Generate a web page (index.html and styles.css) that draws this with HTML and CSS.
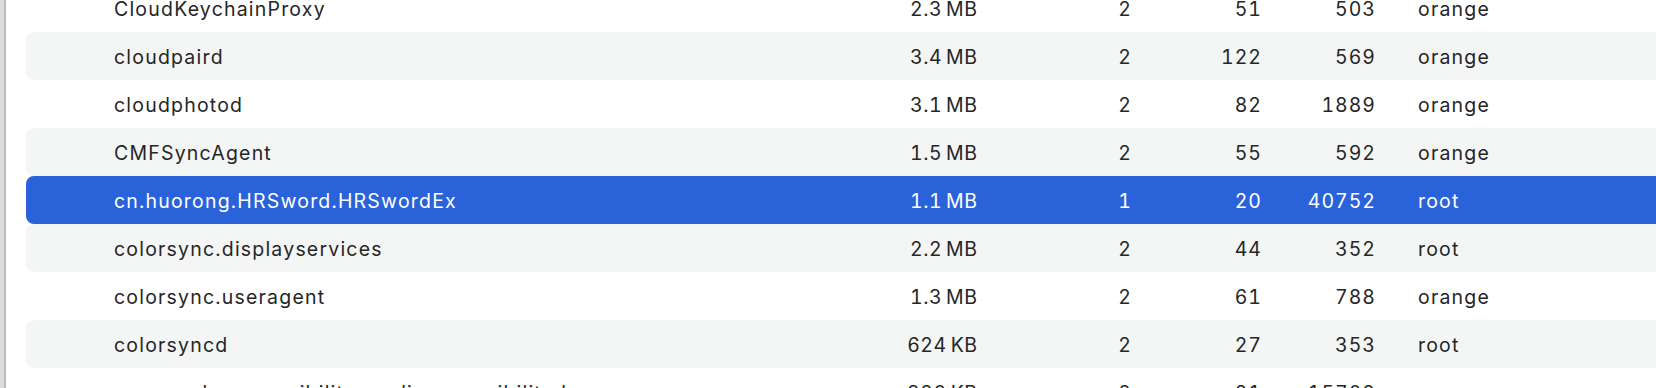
FILE: index.html
```html
<!DOCTYPE html>
<html>
<head>
<meta charset="utf-8">
<link rel="stylesheet" href="styles.css">
</head>
<body>
<div class="window">
  <div class="edge"></div>
  <div class="list">
    <div class="row"><div class="name">CloudKeychainProxy</div><div class="num size">2.3&thinsp;MB</div><div class="num thr">2</div><div class="num ports">51</div><div class="num pid">503</div><div class="user">orange</div></div>
    <div class="row alt"><div class="name">cloudpaird</div><div class="num size">3.4&thinsp;MB</div><div class="num thr">2</div><div class="num ports">122</div><div class="num pid">569</div><div class="user">orange</div></div>
    <div class="row"><div class="name">cloudphotod</div><div class="num size">3.1&thinsp;MB</div><div class="num thr">2</div><div class="num ports">82</div><div class="num pid">1889</div><div class="user">orange</div></div>
    <div class="row alt"><div class="name">CMFSyncAgent</div><div class="num size">1.5&thinsp;MB</div><div class="num thr">2</div><div class="num ports">55</div><div class="num pid">592</div><div class="user">orange</div></div>
    <div class="row selected"><div class="name">cn.huorong.HRSword.HRSwordEx</div><div class="num size">1.1&thinsp;MB</div><div class="num thr">1</div><div class="num ports">20</div><div class="num pid">40752</div><div class="user">root</div></div>
    <div class="row alt"><div class="name">colorsync.displayservices</div><div class="num size">2.2&thinsp;MB</div><div class="num thr">2</div><div class="num ports">44</div><div class="num pid">352</div><div class="user">root</div></div>
    <div class="row"><div class="name">colorsync.useragent</div><div class="num size">1.3&thinsp;MB</div><div class="num thr">2</div><div class="num ports">61</div><div class="num pid">788</div><div class="user">orange</div></div>
    <div class="row alt"><div class="name">colorsyncd</div><div class="num size">624&thinsp;KB</div><div class="num thr">2</div><div class="num ports">27</div><div class="num pid">353</div><div class="user">root</div></div>
    <div class="row"><div class="name">com.apple.accessibility.mediaaccessibilityd</div><div class="num size">320&thinsp;KB</div><div class="num thr">2</div><div class="num ports">21</div><div class="num pid">15702</div><div class="user">orange</div></div>
  </div>
</div>
</body>
</html>
```

FILE: styles.css
```css
html, body {
  margin: 0;
  padding: 0;
  background: #ffffff;
  overflow: hidden;
}

.window {
  display: flex;
  align-items: flex-start;
  width: 1656px;
  height: 388px;
  overflow: hidden;
  font-family: Inter, "Liberation Sans", sans-serif;
  font-size: 19.5px;
  color: #262626;
  font-variant-numeric: tabular-nums;
}

.edge {
  flex: 0 0 4px;
  align-self: stretch;
  background: #dcdcdc;
  border-right: 2px solid #b9b9b9;
}

.list {
  flex: 0 0 1680px;
  margin-left: 20px;
  margin-top: -16px;
}

.row {
  display: grid;
  grid-template-columns: 763px 100px 154px 130px 114px 1fr;
  align-items: center;
  height: 48px;
  padding-left: 88px;
  padding-top: 2px;
  box-sizing: border-box;
  border-radius: 8px;
  white-space: nowrap;
}

.row.alt {
  background: #f4f5f5;
}

.row.selected {
  background: #2a63d9;
  color: #ffffff;
}

.name {
  overflow: hidden;
  letter-spacing: 1.2px;
}

.num {
  text-align: right;
  letter-spacing: 1px;
  margin-right: -1px;
}

.num.size {
  letter-spacing: 0.5px;
  margin-right: -0.5px;
}

.user {
  padding-left: 43px;
  letter-spacing: 1.2px;
}
```
